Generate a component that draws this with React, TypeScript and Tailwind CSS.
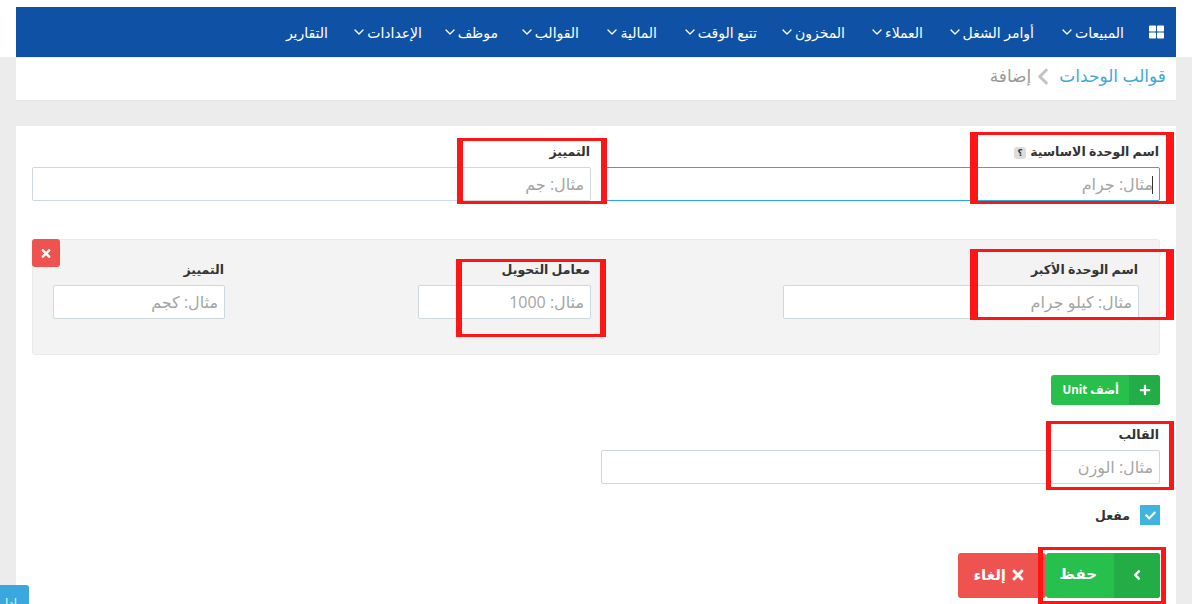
import { ChevronDown } from "lucide-react";
import { FaAngleLeft, FaCheck, FaChevronLeft, FaPlus, FaTimes, FaThLarge } from "react-icons/fa";

const menu = [
  { title: "المبيعات", width: "w-[90px]" },
  { title: "أوامر الشغل", width: "w-[111px]" },
  { title: "العملاء", width: "w-[78px]" },
  { title: "المخزون", width: "w-[88px]" },
  { title: "تتبع الوقت", width: "w-[100px]" },
  { title: "المالية", width: "w-[78px]" },
  { title: "القوالب", width: "w-[81px]" },
  { title: "موظف", width: "w-[76px]" },
  { title: "الإعدادات", width: "w-[94px]" },
];

const Field = ({ label, placeholder, focused }: { label: React.ReactNode; placeholder: string; focused?: boolean }) => (
  <div>
    <label className="mt-[1px] flex h-[19px] items-center pr-[1px] text-[12.5px] font-bold text-[#333]">{label}</label>
    <input
      placeholder={placeholder}
      className={`mt-[5px] h-[34px] w-full rounded-[2px] border bg-white px-[6px] text-[16px] outline-none placeholder:text-[#a5a5a5] ${
        focused ? "border-[#29abe2]" : "border-[#cfd8dc]"
      }`}
    />
  </div>
);

const App = () => {
  return (
    <div
      dir="rtl"
      className="relative h-[604px] w-[1192px] overflow-hidden bg-[#ececec] px-[16px] font-['Open_Sans','DejaVu_Sans',sans-serif]"
    >
      {/* top strip */}
      <div className="absolute inset-x-0 top-0 h-[57px] bg-white" />

      <div className="relative pt-[7px]">
        {/* Nav */}
        <nav className="flex h-[50px] items-center bg-[#0f52a5] pr-[12px] text-[14px] text-white">
          <FaThLarge className="ml-[25px] h-[16px] w-[15px]" />
          {menu.map((item, key) => (
            <span key={key} className={`flex items-center gap-[4px] ${item.width}`}>
              {item.title}
              <ChevronDown className="-mx-[4px] h-[16px] w-[16px]" strokeWidth={2} />
            </span>
          ))}
          <span>التقارير</span>
        </nav>

        {/* Breadcrumb */}
        <div className="mt-[1px] flex h-[43px] items-center border-b border-[#e3e6e6] bg-white px-[10px] pb-[6px] text-[17px]">
          <span className="text-[#3ea9d9]">قوالب الوحدات</span>
          <FaChevronLeft className="mr-[10px] ml-[6px] h-[19px] w-[12px] text-[#c4c4c4]" />
          <span className="text-[#999]">إضافة</span>
        </div>

        {/* Form */}
        <div className="mt-[25px] h-[478px] bg-white px-[16px] pt-[16px]">
          <div className="grid grid-cols-2 gap-[10px]">
            <Field
              focused
              label={
                <>
                  اسم الوحدة الاساسية
                  <span className="mr-[4px] flex h-[12px] w-[12px] items-center justify-center rounded-[3px] bg-[#ddd] text-[9px]">؟</span>
                </>
              }
              placeholder="مثال: جرام"
            />
            <Field label="التمييز" placeholder="مثال: جم" />
          </div>

          <div className="relative mt-[38px] h-[116px] rounded-[3px] border border-[#eaeaea] bg-[#f3f3f3] pr-[20px] pt-[20px]">
            <div className="flex gap-[192px]">
              <div className="w-[356px]">
                <Field label="اسم الوحدة الأكبر" placeholder="مثال: كيلو جرام" />
              </div>
              <div className="w-[173px]">
                <Field label="معامل التحويل" placeholder="مثال: 1000" />
              </div>
              <div className="mr-[1px] w-[172px]">
                <Field label="التمييز" placeholder="مثال: كجم" />
              </div>
            </div>
            <button className="absolute -left-px -top-px flex h-[28px] w-[28px] items-center justify-center rounded-[3px] bg-[#ef5350] text-white">
              <FaTimes className="h-[13px] w-[10px]" />
            </button>
          </div>

          <button className="mt-[20px] flex h-[30px] w-[109px] items-center rounded-[3px] bg-[#28c04c] text-[11.5px] font-bold text-white">
            <span className="flex h-full w-[31px] items-center justify-center rounded-r-[3px] bg-[#22ad47]">
              <FaPlus className="h-[12px] w-[12px]" />
            </span>
            <span className="mr-[10px]">أضف Unit</span>
          </button>

          <div className="mt-[21px] w-[559px]">
            <Field label="القالب" placeholder="مثال: الوزن" />
          </div>

          <div className="mt-[21px] flex gap-[10px] text-[12.5px] font-bold text-[#333]">
            <span className="flex h-[20px] w-[20px] items-center justify-center bg-[#3fb4dc] text-white">
              <FaCheck className="h-[11px] w-[11px]" />
            </span>
            <span className="mt-[2px]">مفعل</span>
          </div>

          <div className="mt-[27px] flex items-start">
            <button className="flex h-[45px] w-[114px] items-center rounded-[3px] bg-[#28c04c] text-[15px] font-bold text-white">
              <span className="flex h-full w-[46px] items-center justify-center rounded-r-[3px] bg-[#22ad47]">
                <FaAngleLeft className="h-[16px] w-[16px]" />
              </span>
              <span className="mr-[17px] pb-[5px]">حفظ</span>
            </button>
            <button className="flex h-[45px] w-[88px] items-center gap-[6px] rounded-[3px] bg-[#ef5350] pr-[22px] text-[15px] font-bold text-white">
              <FaTimes className="h-[16px] w-[12px]" />
              <span className="pb-[2px]">إلغاء</span>
            </button>
          </div>
        </div>
      </div>

      {/* caret in the focused input */}
      <div className="absolute left-[1152px] top-[176px] h-[18px] w-px bg-[#333]" />

      {/* red annotation boxes */}
      <div className="absolute left-[970px] top-[132px] h-[72px] w-[204px] border-x-[8px] border-y-[3px] border-[#fe1616]" />
      <div className="absolute left-[457px] top-[138px] h-[66px] w-[150px] border-x-[6px] border-y-[3px] border-[#fe1616]" />
      <div className="absolute left-[970px] top-[249px] h-[71px] w-[204px] border-x-[8px] border-y-[3px] border-[#fe1616]" />
      <div className="absolute left-[456px] top-[259px] h-[78px] w-[150px] border-x-[6px] border-y-[3px] border-[#fe1616]" />
      <div className="absolute left-[1046px] top-[421px] h-[69px] w-[128px] border-x-[5px] border-y-[3px] border-[#fe1616]" />
      <div className="absolute left-[1038px] top-[547px] h-[57px] w-[128px] border-x-[5px] border-y-[3px] border-[#fe1616]" />

      {/* help tab */}
      <div className="absolute bottom-0 left-0 h-[19px] w-[29px] overflow-hidden rounded-tr-[3px] bg-[#3aa8df] pr-[12px] pt-[11px] text-[12px] leading-[14px] text-[#dff3fb]">
        ادارة
      </div>
    </div>
  );
};

export default App;
